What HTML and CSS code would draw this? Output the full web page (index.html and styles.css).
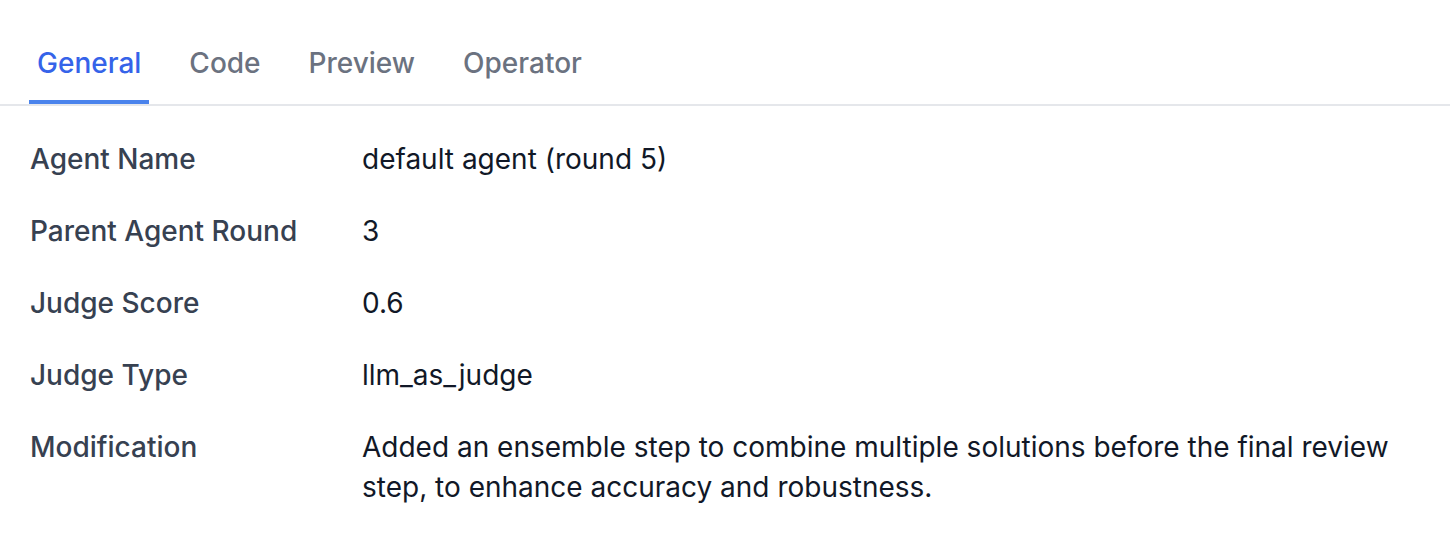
FILE: index.html
```html
<!DOCTYPE html>
<html lang="en">
<head>
<meta charset="utf-8">
<title>Agent details</title>
<link rel="stylesheet" href="styles.css">
</head>
<body>
<div class="panel">
  <nav class="tabs">
    <a class="tab active">General</a>
    <a class="tab">Code</a>
    <a class="tab">Preview</a>
    <a class="tab">Operator</a>
  </nav>
  <dl class="details">
    <div class="row"><dt>Agent Name</dt><dd>default agent (round 5)</dd></div>
    <div class="row"><dt>Parent Agent Round</dt><dd>3</dd></div>
    <div class="row"><dt>Judge Score</dt><dd>0.6</dd></div>
    <div class="row"><dt>Judge Type</dt><dd>llm_as_judge</dd></div>
    <div class="row"><dt>Modification</dt><dd>Added an ensemble step to combine multiple solutions before the final review step, to enhance accuracy and robustness.</dd></div>
  </dl>
</div>
</body>
</html>
```
FILE: styles.css
```css
* { box-sizing: border-box; }
html, body { margin: 0; padding: 0; background: #ffffff; }
body {
  font-family: Inter, "Liberation Sans", sans-serif;
  font-size: 28px;
  line-height: 40px;
}
.panel { width: 1450px; }
.tabs {
  display: flex;
  gap: 32px;
  padding: 31px 0 0 29px;
  border-bottom: 2px solid #e5e7eb;
}
.tab {
  display: block;
  padding: 12px 8px 17px 8px;
  border-bottom: 4px solid transparent;
  font-weight: 500;
  color: #6b7280;
  cursor: pointer;
}
.tab.active {
  color: #3563e9;
  border-bottom-color: #4a83ec;
}
.details {
  margin: 0;
  padding: 17px 30px 0 30px;
}
.row {
  display: grid;
  grid-template-columns: 332px 1fr;
  padding: 16px 0;
}
dt {
  font-weight: 500;
  color: #374151;
}
dd {
  margin: 0;
  color: #111827;
}
```
